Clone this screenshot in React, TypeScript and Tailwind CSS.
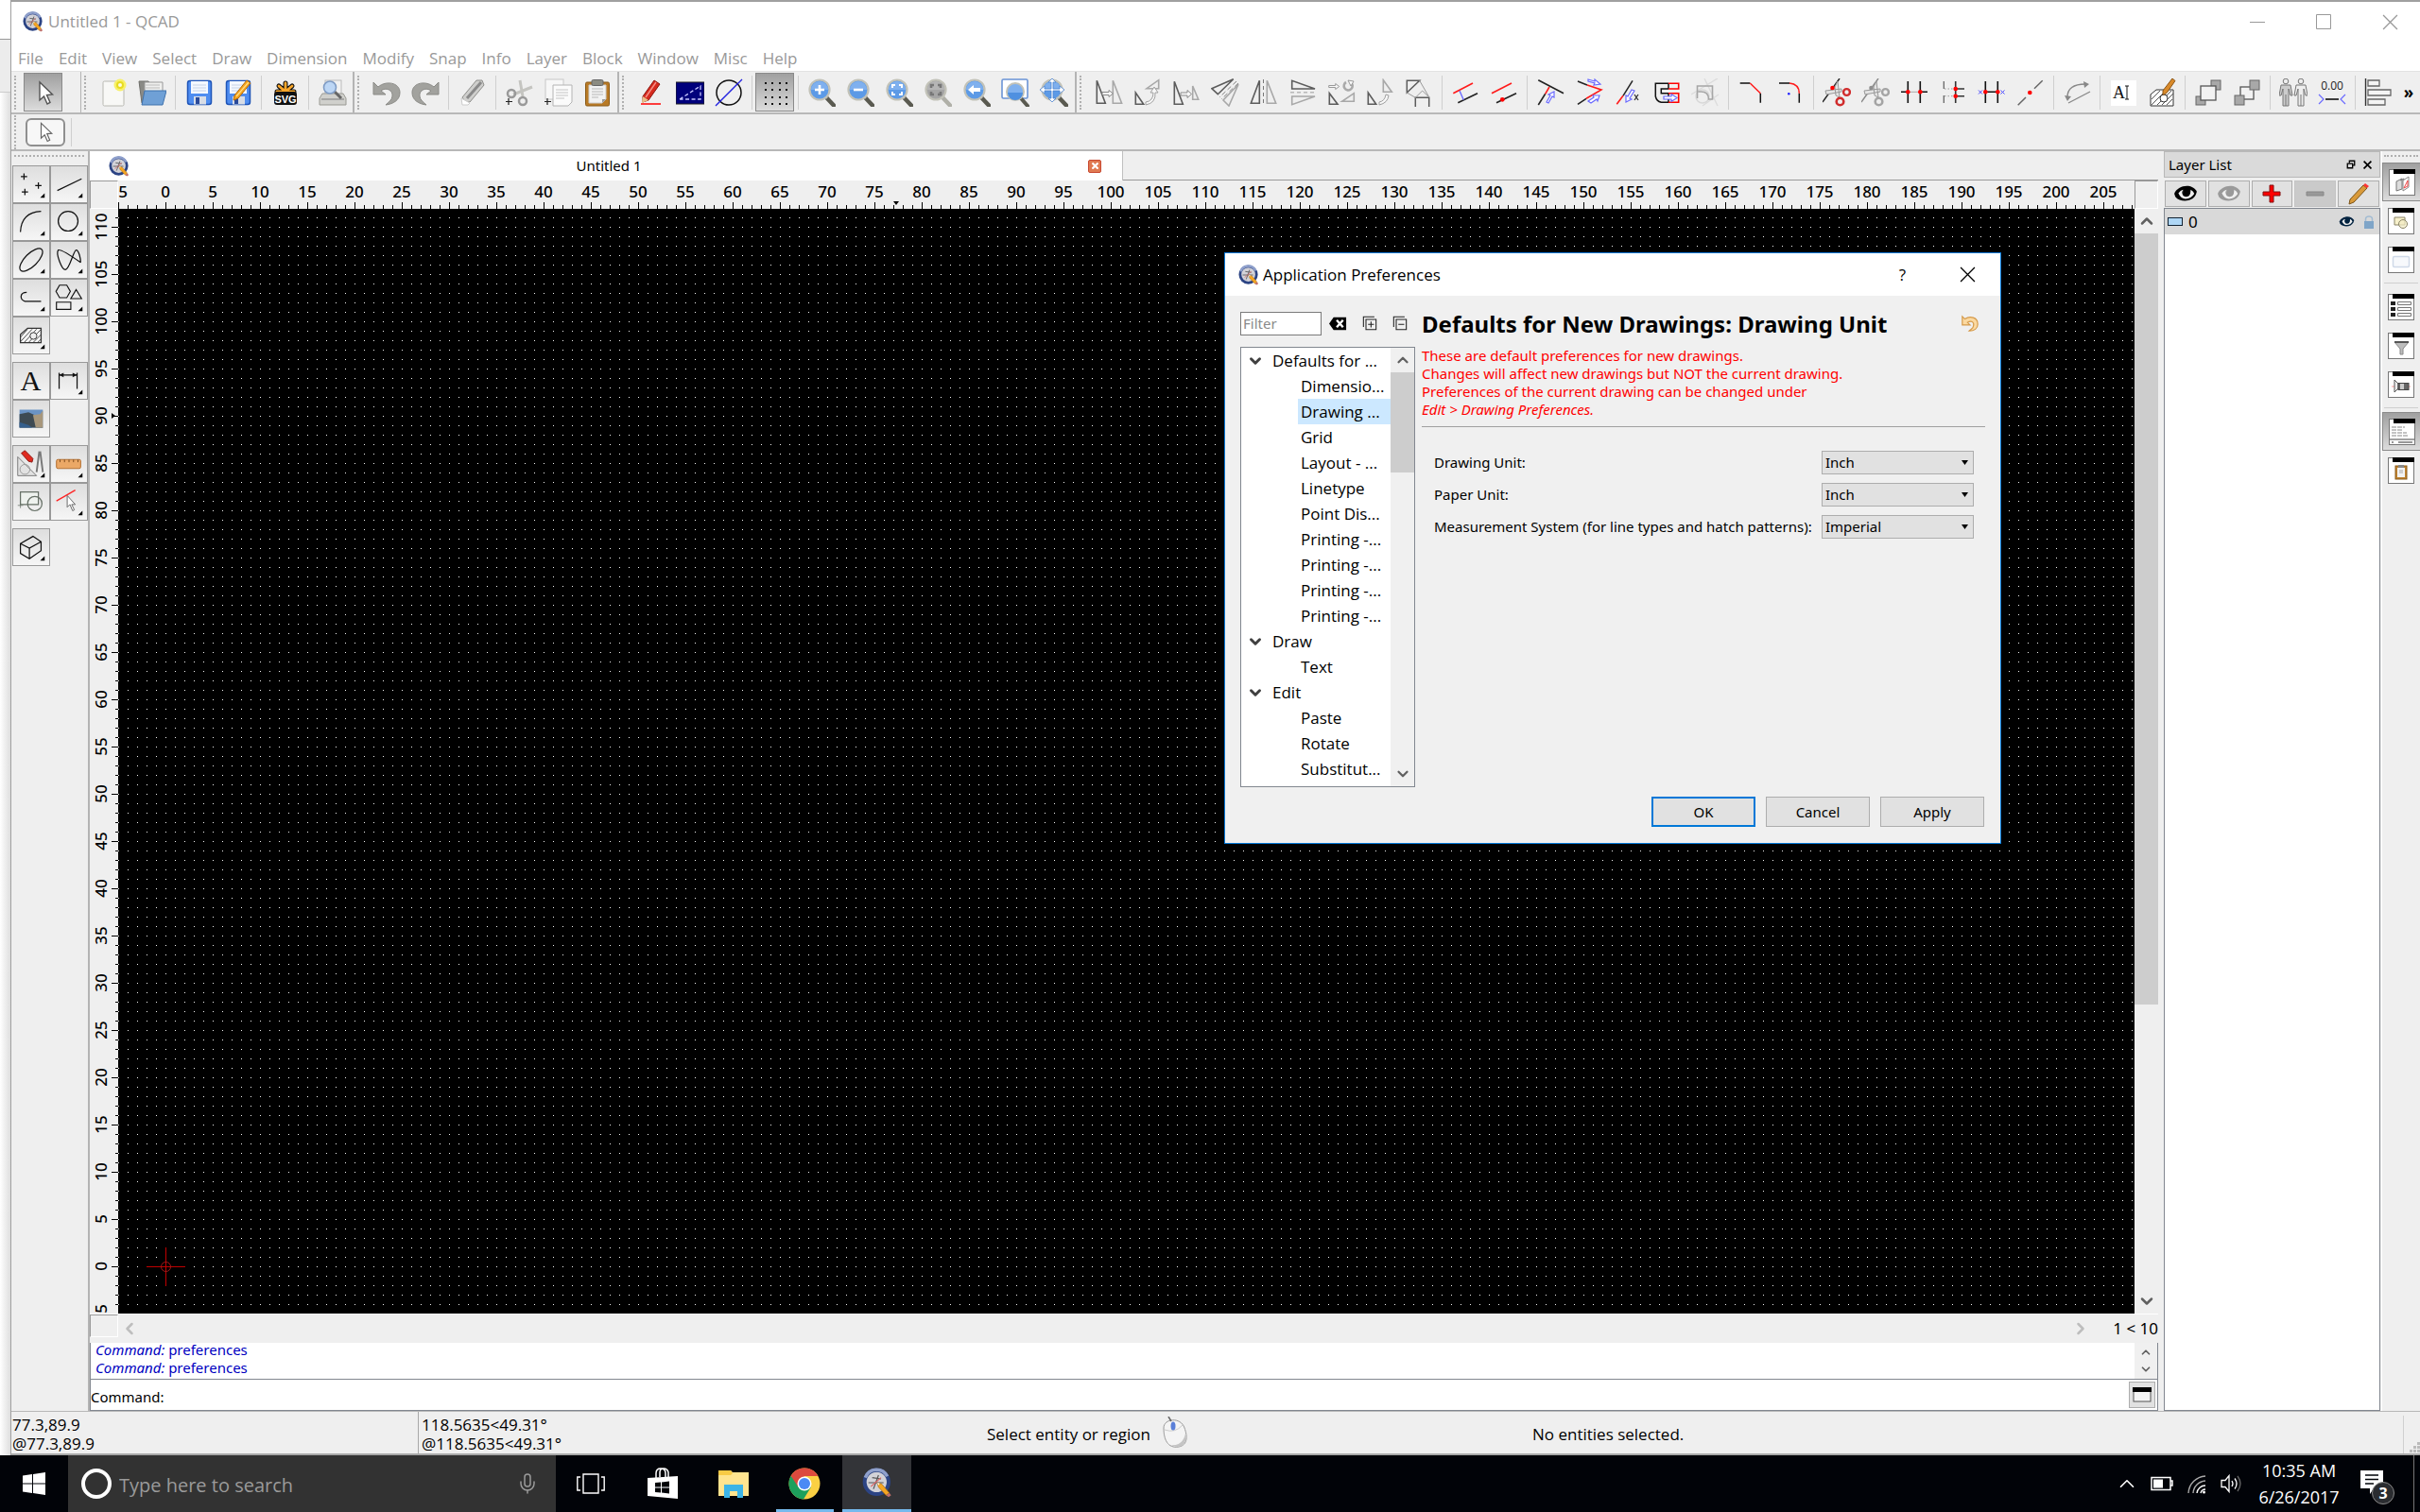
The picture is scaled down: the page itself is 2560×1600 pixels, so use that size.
import React from 'react';
import { ChevronDown, ChevronLeft, ChevronRight, ChevronUp, Mic } from 'lucide-react';

const MENUS = [
  'File', 'Edit', 'View', 'Select', 'Draw', 'Dimension', 'Modify', 'Snap',
  'Info', 'Layer', 'Block', 'Window', 'Misc', 'Help',
];

// Drawing units to pixels
const UNIT = 10;
const ORIGIN_X = 50;
const ORIGIN_Y = 1119;

const DARK = '#5c5c5c';
const SOFT = '#a8a8a8';
const BLUE = '#6a6aff';
const RED = '#ff1a1a';

/* ---------- icons ---------- */

interface SvgProps {
  size?: number;
  box?: number;
  children: React.ReactNode;
}

function Svg({ size = 30, box = 30, children }: SvgProps) {
  return (
    <svg width={size} height={size} viewBox={`0 0 ${box} ${box}`} fill="none" className="shrink-0" aria-hidden="true">
      {children}
    </svg>
  );
}

function Cross({ size = 16, weight = 1.2 }: { size?: number; weight?: number }) {
  return (
    <Svg size={size} box={16}>
      <path d="M1 1l14 14M15 1L1 15" stroke="currentColor" strokeWidth={weight} />
    </Svg>
  );
}

function Logo({ size = 22 }: { size?: number }) {
  return (
    <Svg size={size} box={24}>
      <circle cx="11.500" cy="11.500" r="9.500" fill="#d2d2d8" stroke="#2c4484" strokeWidth="3" />
      <path d="M2.500 8A9.500 9.500 0 0 1 20 7" stroke="#8fa0cc" strokeWidth="2.600" />
      <path d="M5 12h12M9 17l4-11M8 8l7 1" stroke="#555" strokeWidth="0.900" />
      <path d="M7 15l8-7" stroke="#d66" strokeWidth="0.800" />
      <path d="M12 12l3.500 1 6 7-2.500 2-6-6.500z" fill="#f5a623" stroke="#a86a10" strokeWidth="0.500" />
      <path d="M12 12l2 .5-1 1.500z" fill="#fff" />
      <path d="M21.500 20l1.500 2-2 1.500-2-1.500z" fill="#c0706a" />
    </Svg>
  );
}

function Tri({ d, soft = false }: { d: string; soft?: boolean }) {
  return <path d={d} stroke={soft ? SOFT : DARK} strokeWidth="1.600" />;
}

function Magnifier({ gray = false, children }: { gray?: boolean; children?: React.ReactNode }) {
  return (
    <Svg>
      <path d="M20 20l8 8.500" stroke={gray ? '#b0b0a8' : '#5a5a50'} strokeWidth="4.500" strokeLinecap="round" />
      <path d="M18 18l3 3" stroke="#aaa" strokeWidth="2" />
      <circle cx="13" cy="12" r="10.500" fill={gray ? '#a5a5a5' : '#5c9ae6'} stroke="#c2c2b8" strokeWidth="2.200" />
      <path d="M4 12a9 9 0 0 1 18 0z" fill={gray ? '#b5b5b5' : '#7fb0ee'} />
      {children}
    </Svg>
  );
}

function Scissors({ color, dot }: { color: string; dot: string }) {
  return (
    <Svg>
      <path d="M18 0L0 25" stroke={dot === '#ff0000' ? '#222' : '#888'} strokeWidth="1.400" />
      <path d="M16 3l2 17-4-2-1-9zM3 13l17-2v3l-16 3z" fill="#e4e4e4" stroke="#999" />
      <circle cx="25.500" cy="14.500" r="3.400" stroke={color} strokeWidth="2.400" />
      <circle cx="18.500" cy="24.500" r="3.800" stroke={color} strokeWidth="2.600" />
      <circle cx="10.500" cy="10" r="2.300" fill={dot} />
    </Svg>
  );
}

function Floppy({ children }: { children?: React.ReactNode }) {
  return (
    <Svg>
      <rect x="2.500" y="2.500" width="25" height="25" rx="2.500" fill="#4f8df0" stroke="#1f55b8" strokeWidth="1.500" />
      <rect x="6" y="3" width="18" height="13" fill="#f4f8ff" />
      <path d="M8 7h14M8 10h14M8 13h14" stroke="#c8d4e6" />
      <rect x="9" y="19" width="13" height="8.500" fill="#d8dde6" />
      <rect x="11" y="20" width="4" height="7" fill="#2a4a9a" />
      {children}
    </Svg>
  );
}

const PENCIL = (
  <g>
    <path d="M11 18L24 2l4 3-13 16-5 2z" fill="#f7a51e" stroke="#b56a0a" />
    <path d="M13 19L26 4" stroke="#ffe08a" strokeWidth="1.200" />
  </g>
);

const PLUS = <path d="M3 21v7M0 24.500h7" stroke="#222" strokeWidth="1.200" />;

const CURSOR = (
  <Svg>
    <path d="M11 4v19l4.500-4 3.500 8 3-1.500-3.500-8 6-.5z" fill="#fff" stroke="#555" strokeWidth="1.400" />
  </Svg>
);

const CLIPBOARD = (
  <Svg>
    <rect x="2.500" y="4" width="25" height="25" rx="1.500" fill="#b87a26" stroke="#8a5a18" />
    <path d="M6 7h18v15l-4 4H6z" fill="#f2f2f2" stroke="#ccc" />
    <path d="M9 11h12M9 14h12M9 17h12M9 20h7" stroke="#b8b8b8" />
    <rect x="9" y="1.500" width="12" height="6" rx="1.500" fill="#8c8c82" stroke="#666" />
    <path d="M24 22l-4 4v-4z" fill="#999" />
  </Svg>
);

const fileIcons = [
  <Svg key="new">
    <rect x="4" y="3" width="22" height="26" rx="1.500" fill="#f8f8f6" stroke="#b8b8b2" />
    <circle cx="22" cy="7" r="6.500" fill="#f7f06a" />
    <circle cx="22" cy="7" r="3" fill="#fffde0" stroke="#e8dc20" strokeWidth="2" />
  </Svg>,
  <Svg key="open">
    <path d="M1 3h10l2 3h12v20H4z" fill="#8a8a86" stroke="#6e6e6a" />
    <path d="M7 4h19v12H7z" fill="#f0f0ee" stroke="#999" />
    <path d="M8 7h15M8 10h15" stroke="#bbb" />
    <path d="M7 13h23l-4 15H4z" fill="#6fa0d6" stroke="#3f72ad" />
  </Svg>,
  'sep',
  <Floppy key="save" />,
  <Floppy key="save-as">{PENCIL}</Floppy>,
  'sep',
  <Svg key="svg">
    <g stroke="#111" strokeWidth="5" strokeLinecap="round">
      <path d="M15 14V5M15 14L8 8M15 14l7-6M15 14H6M15 14h9" />
    </g>
    <g stroke="#f9a72b" strokeWidth="2.800" strokeLinecap="round">
      <path d="M15 14V5M15 14L8 8M15 14l7-6M15 14H6M15 14h9" />
    </g>
    <rect x="3" y="14" width="24" height="14" rx="3" fill="#111" />
    <text x="15" y="26" textAnchor="middle" fontSize="11" fontWeight="700" fill="#fff" fontFamily="Liberation Sans">SVG</text>
  </Svg>,
  'sep',
  <Svg key="preview">
    <rect x="7" y="2" width="17" height="15" fill="#f1f1f1" stroke="#bbb" />
    <path d="M4 16h22l3 5v7H1v-7z" fill="#d0d0cc" stroke="#9a9a94" />
    <path d="M3 22h24" stroke="#999" strokeWidth="1.500" />
    <path d="M17 14l7 7" stroke="#666" strokeWidth="3" />
    <circle cx="12" cy="9.500" r="6.500" fill="#bcd6f5" stroke="#7f9cc5" strokeWidth="1.600" />
  </Svg>,
];

const editIcons = [
  <Svg key="undo">
    <path d="M1 4v13h13l-5-4c5-4 13-1 12 6-.5 4-4 6-7 9 8-1 15-5 15-13C29 4 14 2 6 9z" fill="#a2a29e" stroke="#8b8b87" />
  </Svg>,
  <Svg key="redo">
    <path d="M29 4v13H16l5-4C16 9 8 12 9 19c.5 4 4 6 7 9C8 27 1 23 1 15 1 4 16 2 24 9z" fill="#a2a29e" stroke="#8b8b87" />
  </Svg>,
  'sep',
  <Svg key="erase">
    <path d="M4 20L19 2h6l2 5-15 18H7z" fill="#cfcfcd" stroke="#8d8d8a" />
    <path d="M9 21L24 4" stroke="#8a8a8a" strokeWidth="3" />
    <path d="M3 21l9 5-2 2H4z" fill="#fff" stroke="#ccc" />
  </Svg>,
  'sep',
  <Svg key="cut">
    <path d="M15 2l3 17M28 9L8 17" stroke="#c4c4c0" strokeWidth="3" />
    <circle cx="6" cy="16" r="4" stroke="#999" strokeWidth="2.500" />
    <circle cx="18" cy="24" r="4" stroke="#999" strokeWidth="2.500" />
    {PLUS}
  </Svg>,
  <Svg key="copy">
    <rect x="1" y="1" width="19" height="21" fill="#f7f7f7" stroke="#c8c8c8" />
    <path d="M9 7h20v18l-4 4H9z" fill="#fbfbfb" stroke="#b4b4b4" />
    <path d="M12 12h13M12 15h13M12 18h13M12 21h9" stroke="#c4c4c4" />
    {PLUS}
  </Svg>,
  <React.Fragment key="paste">{CLIPBOARD}</React.Fragment>,
];

const viewIcons = [
  <Svg key="pen">
    <path d="M6 19L18 2l6 4-12 17-6 2z" fill="#d62a1e" stroke="#8a1510" />
    <path d="M9 20L20 4" stroke="#f59088" strokeWidth="1.500" />
    <path d="M6 19l6 4-7 3z" fill="#e8c088" />
    <path d="M4 27h21" stroke="#ff1010" strokeWidth="1.600" />
  </Svg>,
  <Svg key="draft">
    <rect x="0" y="4" width="30" height="23" fill="#00007c" stroke="#222" />
    <path d="M4 22L26 8v14H4" stroke="#c8c8ff" strokeWidth="1.300" strokeDasharray="4 2.500" />
  </Svg>,
  <Svg key="ortho">
    <circle cx="15" cy="15" r="13" stroke="#111" strokeWidth="1.500" />
    <path d="M1 29L29 1" stroke="#2020e0" strokeWidth="1.300" />
  </Svg>,
  'sep',
  'grid',
  'sep',
  <Magnifier key="in"><path d="M13 7v10M8 12h10" stroke="#fff" strokeWidth="2.600" /></Magnifier>,
  <Magnifier key="out"><path d="M8 12h10" stroke="#fff" strokeWidth="2.600" /></Magnifier>,
  <Magnifier key="auto"><path d="M8 10V7h3M15 7h3v3M18 14v3h-3M11 17H8v-3" stroke="#fff" strokeWidth="2" /></Magnifier>,
  <Magnifier key="sel" gray><path d="M8 10V7h3M15 7h3v3M18 14v3h-3M11 17H8v-3" stroke="#777" strokeWidth="2.600" /></Magnifier>,
  <Magnifier key="prev"><path d="M6 12l6-5v3h7v4h-7v3z" fill="#fff" /></Magnifier>,
  <Svg key="window">
    <rect x="1" y="1" width="27" height="20" rx="1.500" fill="#fff" stroke="#6b94d6" strokeWidth="1.600" />
    <path d="M21 21l7 8" stroke="#5a5a50" strokeWidth="4" strokeLinecap="round" />
    <circle cx="15" cy="14" r="9" fill="#7fb0ee" stroke="#c2c2b8" strokeWidth="2" />
    <path d="M7 15h16a8 8 0 0 1-16 0z" fill="#4f90e0" />
  </Svg>,
  <Magnifier key="pan">
    <path d="M13 0l4 4h-3v7h7V8l5 4-5 4v-3h-7v8h3l-4 4-4-4h3v-8H5v3l-5-4 5-4v3h7V4H9z" fill="#fff" stroke="#4a83d0" strokeWidth="0.800" />
  </Magnifier>,
];

const modifyIcons = [
  <Svg key="move">
    <Tri d="M2.300 2.300v24h9z" />
    <Tri soft d="M19.300 2.300v24h9.300z" />
    <path d="M8 14.500h7v-2l4.500 3.500-4.500 3.500v-2H8z" fill="#f8f8f8" stroke="#8a8a8a" />
  </Svg>,
  <Svg key="rotate">
    <Tri d="M2.300 15v12.300h8.400z" />
    <Tri soft d="M26.700 1.700v9H14z" />
    <path d="M13 25q8-1 8-10h-3l4-6 4 6h-3q1 11-10 13z" fill="#f8f8f8" stroke="#a0a0a0" />
  </Svg>,
  <Svg key="scale">
    <Tri d="M2.300 3.300v24h9z" />
    <Tri soft d="M21.700 8v14.300h6z" />
    <path d="M9 15h7v-2.500l4.500 4-4.500 4V18H9z" fill="#f8f8f8" stroke="#8a8a8a" />
  </Svg>,
  <Svg key="mirror">
    <Tri d="M.8 10.700L23.700.8 7.300 16.700z" />
    <Tri soft d="M29 6.300L13 23l6 6z" />
    <path d="M27 3L9 20M29 5L11 22" stroke="#888" strokeDasharray="5 3" />
  </Svg>,
  <Svg key="flip-h">
    <Tri d="M10.300 2.300v24h-9z" />
    <path d="M14.500 1v28" stroke="#777" strokeDasharray="4 3" />
    <Tri soft d="M18.300 2.300v24h9.400z" />
  </Svg>,
  <Svg key="flip-v">
    <Tri d="M3.700 2.300V11H28z" />
    <path d="M2 14.700h27" stroke="#b8b8b8" strokeWidth="1.600" strokeDasharray="4 3" />
    <Tri soft d="M3.700 19v8.700L28 19z" />
  </Svg>,
  <Svg key="move-rotate">
    <path d="M1.700 7.500h7v-2l4 3-4 3v-2h-7z" fill="#f8f8f8" stroke="#999" />
    <path d="M26 5.500a4.500 4.500 0 1 1-6-1.500" stroke="#aaa" strokeWidth="2.600" />
    <path d="M22 2l6 1-3 5z" fill="#f8f8f8" stroke="#999" />
    <Tri d="M2.300 15.700v11.600H11z" />
    <Tri soft d="M28.300 15.700v8.600H15.700z" />
  </Svg>,
  <Svg key="rotate2">
    <Tri d="M2.300 15v12.300h8.400z" />
    <Tri soft d="M18.300 1.700v12.600h9z" />
    <path d="M14 25q6-1 7-8l3 1q-1 8-10 10z" fill="#f8f8f8" stroke="#a0a0a0" />
  </Svg>,
  <Svg key="project">
    <path d="M2.300 15V2.300h13.400zM11.300 30V20.300h14.400V30" stroke={DARK} strokeWidth="1.500" />
    <path d="M15.700 2.300l10 17.400M2.300 15l9 5.300 7.400-7.300 7 7" stroke="#999" />
  </Svg>,
  'sep',
  <Svg key="parallel">
    <path d="M2.300 15.700L23 5" stroke={RED} strokeWidth="1.600" />
    <path d="M7.300 25.700l20.700-10" stroke="#222" strokeWidth="1.600" />
    <path d="M9 13l4.300 9.700" stroke={BLUE} strokeWidth="1.400" />
  </Svg>,
  <Svg key="parallel-point">
    <path d="M2 15.700L23 5" stroke={RED} strokeWidth="1.600" />
    <path d="M7 25.700l21-10" stroke="#222" strokeWidth="1.600" />
    <circle cx="13.300" cy="22.300" r="2.400" fill="#f00" />
  </Svg>,
  'sep',
  <Svg key="trim">
    <path d="M2.300 1.700L29 15.700M2.300 28l7.400-11.700" stroke="#222" strokeWidth="1.600" />
    <path d="M9.700 16.300L14 9" stroke={RED} strokeWidth="1.600" />
    <path d="M11 25l4-7-2-1 6-3 0 6-2-1-4 7z" fill="#fff" stroke={BLUE} strokeWidth="1.200" />
  </Svg>,
  <Svg key="trim-both">
    <path d="M3 3l10 4M3 27.300l9-6" stroke="#222" strokeWidth="1.600" />
    <path d="M13 7l15 5-16 9.300" stroke={RED} strokeWidth="1.600" />
    <path d="M14 1l7 2 0-2 6 5-7 1 1-2-7-2zM14 24l6-4-1-2h7l-2 6-1-2-6 4z" fill="#fff" stroke={BLUE} strokeWidth="1.200" />
  </Svg>,
  <Svg key="lengthen">
    <path d="M20 2.300l-10 16" stroke="#222" strokeWidth="1.500" />
    <path d="M10 18.300l-6.700 9" stroke={RED} strokeWidth="1.600" />
    <path d="M19 12l-4 7-2-1v7l6-3-2-1 5-8z" fill="#fff" stroke={BLUE} strokeWidth="1.200" />
    <path d="M22 17l4 6M26 17l-4 6" stroke="#333" strokeWidth="1.300" />
  </Svg>,
  <Svg key="stretch">
    <path d="M17 5.300H3.300V19q1 5 6 6.300H17V15.700M17 11H9.300v4.700H17M17 5v6" stroke="#111" strokeWidth="1.500" />
    <path d="M17 5.300h10.700V11H17M17 15.700h10.700v9.600H17" stroke="#f00" strokeWidth="1.600" />
    <path d="M12 19h8v-2.500l6 4-6 4V22h-8z" fill="#fff" stroke={BLUE} strokeWidth="1.200" />
  </Svg>,
  <Svg key="trim-shape">
    <path d="M0 17L28 0M14 0l14 29M12 29l17-12" stroke="#dcdcdc" strokeWidth="1.400" />
    <circle cx="12" cy="19" r="7" stroke="#d8d8d8" strokeWidth="1.500" />
    <path d="M6.500 21V8h16v14h-4q0-8-8-8h-3" stroke="#a6a6a6" strokeWidth="1.600" />
  </Svg>,
  'sep',
  <Svg key="bevel">
    <path d="M2.700 5h10.600M24.300 15.700v10" stroke="#111" strokeWidth="1.500" />
    <path d="M13.300 5l11 10.700" stroke={RED} strokeWidth="1.500" />
  </Svg>,
  <Svg key="round">
    <path d="M3 5h11M24.300 15.700v10" stroke="#111" strokeWidth="1.500" />
    <path d="M14 5q10.300 1 10.300 10.700" stroke={RED} strokeWidth="1.500" />
    <circle cx="13.300" cy="16.300" r="1.300" fill="#22f" />
  </Svg>,
  'sep',
  <Scissors key="divide" color="#d02c2c" dot="#ff0000" />,
  <Scissors key="divide2" color="#a4a4a4" dot="#8f8f8f" />,
  <Svg key="break">
    <path d="M8.300 3v23M21.300 3v23M1 14.300h7M21 14.300h8" stroke="#111" strokeWidth="1.600" />
    <path d="M8 14.300h13" stroke="#aaa" />
    <circle cx="8.300" cy="14.300" r="2.300" fill="#f00" />
    <circle cx="21.300" cy="14.300" r="2.300" fill="#f00" />
  </Svg>,
  <Svg key="break-auto">
    <path d="M5.300 3v8M5.300 18v8" stroke="#666" strokeWidth="1.300" />
    <path d="M6 11h11M6 18.700h11" stroke="#999" strokeDasharray="1.500 2" />
    <path d="M17.700 3v23M18 11h9M18 18.700h9" stroke="#333" strokeWidth="1.600" />
    <circle cx="17.700" cy="11" r="2.300" fill="#f00" />
    <circle cx="17.700" cy="18.700" r="2.300" fill="#f00" />
  </Svg>,
  <Svg key="segment">
    <path d="M8.300 3v23M21.300 3v23M8 14.300h13" stroke="#111" strokeWidth="1.600" />
    <path d="M1 12.500l4 4M5 12.500l-4 4M24.500 12.500l4 4M28.500 12.500l-4 4" stroke="#44f" />
    <circle cx="8.300" cy="14.300" r="2.300" fill="#f00" />
    <circle cx="21.300" cy="14.300" r="2.300" fill="#f00" />
  </Svg>,
  <Svg key="gap">
    <path d="M1.700 28.300L10 20M27.700 2.300L19 10.700" stroke="#666" strokeWidth="1.500" />
    <circle cx="14.300" cy="15" r="2.300" fill="#f00" />
  </Svg>,
  'sep',
  <Svg key="reverse">
    <path d="M5 20Q5 6 24 6M6 26l23-12" stroke="#888" strokeWidth="1.400" />
    <path d="M22 3l6 3-5 4zM2 18l3 6 4-5z" fill="#888" />
  </Svg>,
  'sep',
  <Svg key="edit-text">
    <rect x="2" y="2" width="27" height="27" fill="#fff" />
    <text x="4" y="21" fontSize="18" fontFamily="Liberation Serif" fill="#111">A</text>
    <path d="M17 8h4M19 8v14M17 22h4" stroke="#111" />
  </Svg>,
  <Svg key="edit-hatch">
    <path d="M3 17l6-5h18v17H3z" fill="#fff" stroke="#333" />
    <path d="M4 22l9-9M4 28l15-15M10 28l15-15M15 28l12-12M20 28l6-6" stroke="#555" />
    <circle cx="17" cy="21" r="4" fill="#fff" stroke="#333" />
    <path d="M16 13L26 0l3 2.500-9 13-4 2z" fill="#d98a2a" stroke="#8a5518" />
  </Svg>,
  'sep',
  <Svg key="front">
    <rect x="2" y="19" width="10" height="9" fill="#a8a8a8" stroke="#666" />
    <rect x="18" y="2" width="10" height="10" fill="#a8a8a8" stroke="#666" />
    <rect x="7" y="8" width="16" height="15" fill="#f2f2f2" stroke="#555" strokeWidth="1.300" />
  </Svg>,
  <Svg key="back">
    <rect x="8" y="9" width="14" height="13" fill="#f2f2f2" stroke="#555" strokeWidth="1.300" />
    <rect x="2" y="18" width="10" height="10" fill="#a8a8a8" stroke="#666" />
    <rect x="18" y="2" width="10" height="10" fill="#a8a8a8" stroke="#666" />
  </Svg>,
  'sep',
  <Svg key="copy-props">
    {[7, 23].map((x) => (
      <g key={x} stroke="#777">
        <circle cx={x} cy="3" r="2.800" fill="#eee" />
        <path d={`M${x - 5} 7h10l2 11h-2l-2-7v18h-6V11l-2 7h-2z`} fill={x === 7 ? '#ccc' : '#eee'} />
        <path d={`M${x} 17v12`} />
      </g>
    ))}
  </Svg>,
  <Svg key="dim">
    <text x="15" y="12" textAnchor="middle" fontSize="12" fontFamily="Open Sans" fill="#222">0.00</text>
    <path d="M8 22h14" stroke="#111" strokeWidth="1.600" />
    <path d="M1 17l5 5-5 5M29 17l-5 5 5 5" stroke={BLUE} strokeWidth="1.200" />
  </Svg>,
  'sep',
  <Svg key="align">
    <path d="M1.500 0v29" stroke="#333" strokeWidth="1.400" />
    <path d="M4 2h12v6H4zM4 12h24v6H4zM4 22h18v6H4z" fill="#f4f4f4" stroke="#666" strokeWidth="1.300" />
  </Svg>,
];

const paletteIcons: Record<string, React.ReactNode> = {
  point: <path d="M12 8v7M8.500 11.500h7M28 18v7M24.500 21.500h7M13 25v7M9.500 28.500h7" stroke="#111" strokeWidth="1.300" />,
  line: <path d="M7 27l27-13" stroke="#111" strokeWidth="1.300" />,
  arc: <path d="M8 31Q9 9 31 8" stroke="#111" strokeWidth="1.300" />,
  circle: <circle cx="19" cy="19" r="11" stroke="#111" strokeWidth="1.300" />,
  ellipse: <ellipse cx="20" cy="20" rx="16.500" ry="7" transform="rotate(-45 20 20)" stroke="#111" strokeWidth="1.300" />,
  spline: <path d="M33 23Q12 8 8 9c-3 4 4 22 8 22C21 30 25 9 28 9c3 0 5 10 5 14" stroke="#111" strokeWidth="1.300" />,
  polyline: <path d="M31 24H13c-6-2-6-10 2-10" stroke="#111" strokeWidth="1.300" />,
  shape: <path d="M9.500 6h8l4 7-4 7h-8l-4-7zM28 11l6 10H22zM6 25h16v8H6z" stroke="#111" strokeWidth="1.200" />,
  hatch: (
    <g stroke="#333">
      <path d="M8 19l8-7h15v16H8z" fill="#f6f6f6" strokeWidth="1.300" />
      <path d="M8 22l8-9M8 27l13-14M12 28l14-15M17 28l14-15M22 28l9-9M27 28l4-4" strokeWidth="0.900" />
      <circle cx="22.500" cy="20.500" r="3.800" fill="#eee" />
    </g>
  ),
  text: <text x="19.500" y="31" textAnchor="middle" fontSize="32" fontFamily="Liberation Serif" fill="#111">A</text>,
  dimension: (
    <g stroke="#111" strokeWidth="1.300">
      <path d="M9 11v18M29 11v18M9 13.500h20" />
      <path d="M9 13.500l5-2.500v5zM29 13.500l-5-2.500v5z" fill="#111" stroke="none" />
    </g>
  ),
  image: (
    <g>
      <rect x="7" y="10" width="26" height="20" fill="#6b93c4" />
      <path d="M7 15l10-2 11 5 5 12H7z" fill="#3e4a52" />
      <path d="M22 16l8-1 3-4v19h-8z" fill="#a8977c" />
      <path d="M7 24l10 3 4 3H7z" fill="#355f8c" />
    </g>
  ),
  snap: (
    <g>
      <path d="M5 12v21h21z" fill="#e2e2e2" stroke="#777" />
      <circle cx="13" cy="26" r="5.500" stroke="#999" />
      <path d="M9 8l4-3 9 9-1 4-4-1z" fill="#e02a20" stroke="#8a1a14" />
      <path d="M29 6l-3 23M30 6l3 23" stroke="#777" strokeWidth="2" />
    </g>
  ),
  ruler: (
    <g>
      <rect x="6" y="15" width="27" height="10" rx="1.500" fill="#eba866" stroke="#b06c2c" />
      <path d="M10 15v3M15 15v3M20 15v3M25 15v3M30 15v3" stroke="#7a4a1c" />
    </g>
  ),
  block: (
    <g stroke="#667066" strokeWidth="1.300">
      <path d="M8 9h20v14H8z" fill="#eef2ee" />
      <circle cx="24" cy="22" r="8" />
      <path d="M8 21v6M5 24h6" strokeWidth="0.800" />
    </g>
  ),
  select: (
    <g>
      <path d="M6 19L27 7" stroke="#f22" strokeWidth="1.400" />
      <path d="M18 13v13l3-3 3 7 2-1-3-6h4z" fill="#fff" stroke="#666" />
    </g>
  ),
  box: <path d="M8 16l14-8 9 6v10l-13 9-10-6zM8 16l10 5 13-7M18 21v12" stroke="#111" strokeWidth="1.300" />,
};

const PALETTE = [
  [
    ['point', 1], ['line', 1], ['arc', 1], ['circle', 1], ['ellipse', 1],
    ['spline', 1], ['polyline', 1], ['shape', 1], ['hatch', 1],
  ],
  [['text', 0], ['dimension', 1], ['image', 0]],
  [['snap', 1], ['ruler', 1], ['block', 0], ['select', 1]],
  [['box', 1]],
] as [string, number][][];

const WIDGETS: (string | null)[] = ['layers', 'blocks', 'views', null, 'properties', 'filter', 'library', null, 'command', 'clipboard'];

const widgetIcons: Record<string, React.ReactNode> = {
  layers: (
    <g>
      <path d="M8 13l6-3v11l-6 2zM12 12l4-2v11" fill="#ddd" stroke="#777" />
      <path d="M15 12l6-4v11l-6 4z" fill="#fff" stroke="#888" />
      <path d="M16 20l4-8v6z" stroke="#e44" />
    </g>
  ),
  blocks: (
    <g stroke="#8a8466">
      <path d="M7 10h11v8H7z" fill="#f8f2cc" />
      <circle cx="16" cy="17" r="4.500" fill="#f4edc4" fillOpacity="0.700" />
    </g>
  ),
  views: <rect x="5.500" y="10.500" width="17" height="11" rx="1.500" fill="#f7f9fc" stroke="#cfd9e8" strokeWidth="1.500" />,
  properties: (
    <g>
      <path d="M3 8h5v4H3zM3 14h5v4H3zM3 20h5v4H3z" fill="#222" />
      <path d="M10.500 8.500h14v3h-14zM10.500 14.500h14v3h-14zM10.500 20.500h14v3h-14z" stroke="#777" />
    </g>
  ),
  filter: (
    <g>
      <path d="M7 10h15l-6 7v6h-3v-6z" fill="#bdbdbd" stroke="#888" />
      <path d="M7 10h15" stroke="#555" strokeWidth="2" />
    </g>
  ),
  library: (
    <g>
      <path d="M4 16h20" stroke="#f99" />
      <path d="M7 9v13l4-4v-5z" fill="#eee" stroke="#555" />
      <rect x="11" y="12.500" width="11" height="7" fill="#666" stroke="#444" />
      <path d="M13 13h4v6h-4z" fill="#ccc" />
    </g>
  ),
  command: (
    <g>
      <path d="M3 9h14M3 12h12M3 15h16M3 18h17" stroke="#888" strokeDasharray="5 1" />
      <path d="M1 22h26" stroke="#444" />
      <path d="M3 25h2M10 25h15" stroke="#777" strokeWidth="1.600" />
    </g>
  ),
  clipboard: (
    <g>
      <rect x="8" y="9" width="12" height="14" fill="#c08330" stroke="#8a5a18" />
      <rect x="10" y="11" width="8" height="10" fill="#f2f2f2" />
      <path d="M12 14h4M12 16h4" stroke="#aaa" />
      <rect x="11" y="8" width="6" height="3" fill="#888" />
    </g>
  ),
};

function Eye({ color, size = 26 }: { color: string; size?: number }) {
  return (
    <Svg size={size} box={24}>
      <path d="M1 12C4 4 18 1 23 10l-1 3c-3 7-15 8-20 2" fill={color} />
      <path d="M5 11.500q2-3 4.500-3.500-1 5 2.500 6 5 .5 5-6 3 1.500 3.500 4-3 5-8.500 5-4.500 0-7-5.500z" fill="#f0f0f0" />
      <path d="M8.500 9q0 6 4 6 4.500 0 4-6-1 3-4 3-2.500 0-4-3z" fill={color} />
    </Svg>
  );
}

/* ---------- toolbars ---------- */

function Grip() {
  return (
    <div className="flex w-[13px] shrink-0 items-center pl-[3px]">
      <div className="h-9 w-0 border-l-2 border-dotted border-[#b0b0b0]" />
    </div>
  );
}

interface ToolGroupProps {
  icons: React.ReactNode[];
  sep?: string;
  className?: string;
}

function ToolGroup({ icons, sep = 'w-[9px]', className = '' }: ToolGroupProps) {
  return (
    <div className={`flex shrink-0 items-center border-[#b4b4b4] ${className}`}>
      <Grip />
      {icons.map((icon, i) => {
        if (icon === 'sep') {
          return (
            <div key={i} className={`flex shrink-0 justify-center ${sep}`}>
              <div className="h-9 w-px bg-[#cfcfcf]" />
            </div>
          );
        }
        if (icon === 'grid') {
          return (
            <button key={i} aria-label="Grid" className="flex h-[41px] w-[41px] items-center justify-center border border-[#8a8a8a] bg-linear-to-b from-[#a0a0a0] to-[#dcdcdc]">
              <Svg>
                {[5, 12, 20, 27].map((y) =>
                  [4, 11, 19, 26].map((x) => <rect key={`${x}-${y}`} x={x} y={y - 1} width="2" height="2" fill="#111" />)
                )}
              </Svg>
            </button>
          );
        }
        return (
          <button key={i} className="flex h-[41px] w-[41px] shrink-0 items-center justify-center">
            {icon}
          </button>
        );
      })}
    </div>
  );
}

function Toolbars() {
  return (
    <div className="shrink-0 border-t border-[#e2e2e2] bg-[#efefef]">
      <div className="flex h-[45px] overflow-hidden border-b-2 border-[#b8b8b8]">
        <div className="flex shrink-0 items-center border-r border-[#b4b4b4] pr-[19px]">
          <Grip />
          <button aria-label="Reset" className="flex h-[41px] w-[41px] items-center justify-center border border-[#8a8a8a] bg-linear-to-b from-[#a0a0a0] to-[#dcdcdc]">
            {CURSOR}
          </button>
        </div>
        <ToolGroup icons={fileIcons} className="border-r-2 pr-px" />
        <ToolGroup icons={editIcons} className="border-r-2 pr-px" />
        <ToolGroup icons={viewIcons} sep="w-2" className="border-r-2 pr-[2px]" />
        <ToolGroup icons={modifyIcons} sep="w-2" />
        <button aria-label="More tools" className="flex flex-1 items-center justify-center text-[17px] leading-6 font-bold">»</button>
      </div>
      <div className="flex h-[39px] border-b-2 border-[#b8b8b8]">
        <Grip />
        <div className="flex items-center gap-1.5 pl-0.5">
          <button aria-label="Select" className="flex h-[30px] w-[42px] items-center justify-center rounded-md border-2 border-[#8f8f8f] bg-[#f7f7f7]">
            <Svg size={25}>
              <path d="M9 4v19l4.500-4 3.500 8 3-1.500-3.500-8 6-.5z" fill="#fff" stroke="#666" strokeWidth="1.400" />
            </Svg>
          </button>
          <div className="h-[30px] w-px bg-[#cfcfcf]" />
        </div>
      </div>
    </div>
  );
}

function Palette() {
  return (
    <aside className="flex w-[83px] shrink-0 flex-col border-r-2 border-[#b4b4b4] bg-[#efefef] pt-1 pl-px">
      <div className="mr-1 ml-0.5 border-t-2 border-dotted border-[#b0b0b0]" />
      <div className="mt-[9px] flex flex-col gap-2">
        {PALETTE.map((group, g) => (
          <div key={g} className="grid grid-cols-[40px_40px]">
            {group.map(([name, more]) => (
              <button key={name} aria-label={name} className="h-10 w-10 border border-[#999] bg-linear-to-b from-[#dedede] to-[#f6f6f6]">
                <svg viewBox="0 0 40 40" fill="none" className="h-full w-full">
                  {paletteIcons[name]}
                  {more === 1 && <path d="M35 30v5h-5z" fill="#000" />}
                </svg>
              </button>
            ))}
          </div>
        ))}
      </div>
    </aside>
  );
}

/* ---------- drawing area ---------- */

function range(from: number, to: number) {
  return Array.from({ length: to - from + 1 }, (_, i) => from + i);
}

function HorizontalRuler() {
  return (
    <svg className="h-[30px] w-full min-w-0 flex-1" aria-hidden="true">
      {range(-5, 208).map((u) => {
        const x = ORIGIN_X + u * UNIT;
        return (
          <g key={u}>
            <path d={`M${x + 0.5} 30V${u % 5 === 0 ? 23 : 26}`} stroke="#000" />
            {u % 5 === 0 && (
              <text x={u < 0 ? x + 5 : x} y="18" textAnchor="middle" fontSize="17" fontWeight="500">{Math.abs(u)}</text>
            )}
          </g>
        );
      })}
      <path d="M820 22h6l-3 4z" />
    </svg>
  );
}

function VerticalRuler() {
  return (
    <svg className="w-[30px] shrink-0 bg-[#efefef]" aria-hidden="true">
      {range(-5, 111).map((u) => {
        const y = ORIGIN_Y - u * UNIT;
        return (
          <g key={u}>
            <path d={`M30 ${y + 0.5}H${u % 5 === 0 ? 23 : 27}`} stroke="#000" />
            {u % 5 === 0 && (
              <text transform={`translate(18 ${u < 0 ? y - 5 : y}) rotate(-90)`} textAnchor="middle" fontSize="17" fontWeight="500">{Math.abs(u)}</text>
            )}
          </g>
        );
      })}
      <path d="M23 216v6l4-3z" />
    </svg>
  );
}

function Canvas() {
  return (
    <svg className="min-w-0 flex-1 bg-black" aria-label="Drawing">
      <defs>
        <pattern id="grid" width={UNIT} height={UNIT} patternUnits="userSpaceOnUse">
          <rect x="0" y="9" width="1" height="1" fill="#f0f0f0" />
        </pattern>
      </defs>
      <rect width="100%" height="100%" fill="url(#grid)" />
      <path d={`M${ORIGIN_X - 20} ${ORIGIN_Y + 0.5}h41M${ORIGIN_X + 0.5} ${ORIGIN_Y - 20}v41`} stroke="#c00000" />
      <circle cx={ORIGIN_X + 0.5} cy={ORIGIN_Y + 0.5} r="5" fill="none" stroke="#a01818" />
    </svg>
  );
}

function DrawingArea() {
  return (
    <section className="flex min-w-0 flex-1 flex-col">
      <div className="flex h-[31px] shrink-0 items-stretch">
        <div className="flex w-[1093px] items-center border-r border-[#c0c0c0] bg-white pr-[22px] pl-5">
          <Logo />
          <span className="flex-1 text-center text-[15px]">Untitled 1</span>
          <button aria-label="Close tab" className="flex h-3.5 w-3.5 items-center justify-center rounded-xs border border-[#c84a32] bg-[#e07a52] text-white">
            <Cross size={7} weight={5} />
          </button>
        </div>
        <div className="flex-1 border-b border-[#999]" />
      </div>
      <div className="flex h-[30px] shrink-0">
        <div className="w-[30px] shrink-0 border border-t-[#999] border-r-white border-b-white border-l-[#999]" />
        <HorizontalRuler />
        <div className="w-[25px] shrink-0 border border-t-[#999] border-r-white border-b-white border-l-[#999]" />
      </div>
      <div className="flex min-h-0 flex-1">
        <VerticalRuler />
        <Canvas />
        <div className="flex w-[25px] shrink-0 flex-col items-center text-[#606060]">
          <div className="flex h-[26px] items-center"><ChevronUp size={20} strokeWidth={3} /></div>
          <div className="w-full flex-[816] bg-[#cdcdcd]" />
          <div className="flex-[300]" />
          <div className="flex h-[27px] items-center"><ChevronDown size={20} strokeWidth={3} /></div>
        </div>
      </div>
      <div className="flex h-[31px] shrink-0 items-center border-t border-white">
        <div className="h-6 w-[30px] self-start border border-t-[#999] border-r-white border-b-white border-l-[#999]" />
        <ChevronLeft size={20} strokeWidth={3} className="ml-0.5 text-[#bdbdbd]" />
        <div className="flex-1" />
        <ChevronRight size={20} strokeWidth={3} className="mr-6 text-[#bdbdbd]" />
        <span className="text-[17px]">1 &lt; 10</span>
      </div>
      <div className="flex h-[39px] shrink-0 border-r border-b border-l border-[#828790] bg-white">
        <div className="flex-1 overflow-hidden pl-[5px] text-[15px] leading-[19px] text-[#0000c0]">
          <p className="-mt-0.5"><i>Command:</i> preferences</p>
          <p><i>Command:</i> preferences</p>
        </div>
        <div className="flex w-6 flex-col items-center justify-evenly bg-[#f0f0f0] text-[#606060]">
          <ChevronUp size={14} strokeWidth={3} />
          <ChevronDown size={14} strokeWidth={3} />
        </div>
      </div>
      <div className="flex h-[33px] shrink-0 items-center border-r border-b border-l border-[#828790] bg-white pr-0.5">
        <label htmlFor="command" className="pt-1 text-[15px]">Command:</label>
        <input id="command" className="min-w-0 flex-1 px-1 outline-none" />
        <button aria-label="Toggle history" className="flex h-7 w-7 items-center justify-center border border-[#adadad] bg-[#e1e1e1]">
          <Svg size={20} box={20}>
            <rect x="1" y="3" width="18" height="14" fill="#f4f4f4" stroke="#555" />
            <path d="M0 2h20v5H0z" fill="#000" />
          </Svg>
        </button>
      </div>
    </section>
  );
}

/* ---------- docks ---------- */

function LayerList() {
  return (
    <section className="ml-1.5 flex w-[229px] shrink-0 flex-col">
      <header className="flex h-7 shrink-0 items-center border border-[#b8b8b8] bg-[#dadada] pr-1 pl-1 text-[15px]">
        <h2 className="flex-1">Layer List</h2>
        <button aria-label="Float" className="mr-2">
          <Svg size={10} box={12}>
            <path d="M4 4V1.500h6.500V7H8M1.500 5h6.500v5.500H1.500z" stroke="#000" strokeWidth="1.600" />
          </Svg>
        </button>
        <button aria-label="Close" className="pr-1"><Cross size={9} weight={3} /></button>
      </header>
      <div className="mt-[3px] mb-px grid h-7 shrink-0 grid-cols-5 gap-0.5 px-px">
        <button aria-label="Show all" className="flex items-center justify-center border border-[#adadad] bg-[#e1e1e1]"><Eye color="#000" /></button>
        <button aria-label="Hide all" className="flex items-center justify-center border border-[#adadad] bg-[#e1e1e1]"><Eye color="#9a9a9a" /></button>
        <button aria-label="Add layer" className="flex items-center justify-center border border-[#adadad] bg-[#e1e1e1]">
          <Svg size={20} box={20}><path d="M8 1h4v7h7v4h-7v7H8v-7H1V8h7z" fill="#f00" stroke="#801010" /></Svg>
        </button>
        <button aria-label="Remove layer" className="flex items-center justify-center border border-[#c4c4c4] bg-[#cacaca]">
          <Svg size={20} box={20}><path d="M1 8h18v4H1z" fill="#999" stroke="#888" /></Svg>
        </button>
        <button aria-label="Edit layer" className="flex items-center justify-center border border-[#adadad] bg-[#e1e1e1]">
          <Svg size={24} box={24}>
            <path d="M3 18L17 3l4 3L7 21l-5 2z" fill="#d99a3a" stroke="#7a5418" />
            <path d="M17 3l2-2 4 3-2 2z" fill="#f33" />
          </Svg>
        </button>
      </div>
      <ul className="flex-1 border border-[#828790] bg-white">
        <li className="flex h-[27px] items-center bg-[#d9d9d9] pr-1 pl-[3px] text-[17px]">
          <span className="h-[9px] w-4 border border-[#123] bg-[#aed6f5]" />
          <span className="flex-1 pl-1.5">0</span>
          <Eye color="#022340" size={17} />
          <span className="ml-2 flex">
            <Svg size={14} box={14}>
              <path d="M3.500 7V4a3.500 3 0 0 1 7 0v3" stroke="#a3bcd2" strokeWidth="1.500" />
              <rect x="2" y="6" width="10" height="8" fill="#7fa5c8" />
            </Svg>
          </span>
        </li>
      </ul>
    </section>
  );
}

function WidgetBar() {
  return (
    <aside className="ml-px flex w-[41px] shrink-0 flex-col items-center border-l border-white pt-1">
      <div className="mb-1.5 w-9 border-t-2 border-dotted border-[#b0b0b0]" />
      {WIDGETS.map((name, i) =>
        name === null ? (
          <div key={i} className="my-1 h-px w-9 bg-[#cfcfcf]" />
        ) : (
          <button
            key={name}
            aria-label={name}
            className={`flex h-[41px] w-full items-center justify-center ${
              name === 'layers' || name === 'command'
                ? 'border border-r-0 border-[#8a8a8a] bg-linear-to-b from-[#a0a0a0] to-[#dcdcdc]'
                : ''
            }`}
          >
            <Svg size={28} box={28}>
              <rect x="0.500" y="0.500" width="27" height="27" fill="#fff" stroke="#777" />
              <path d="M5 0h23v5H5z" fill="#000" />
              {widgetIcons[name]}
            </Svg>
          </button>
        )
      )}
    </aside>
  );
}

/* ---------- preferences dialog ---------- */

interface TreeItem {
  label: string;
  parent?: boolean;
  selected?: boolean;
}

const TREE: TreeItem[] = [
  { label: 'Defaults for ...', parent: true },
  { label: 'Dimensio...' },
  { label: 'Drawing ...', selected: true },
  { label: 'Grid' },
  { label: 'Layout - ...' },
  { label: 'Linetype' },
  { label: 'Point Dis...' },
  { label: 'Printing -...' },
  { label: 'Printing -...' },
  { label: 'Printing -...' },
  { label: 'Printing -...' },
  { label: 'Draw', parent: true },
  { label: 'Text' },
  { label: 'Edit', parent: true },
  { label: 'Paste' },
  { label: 'Rotate' },
  { label: 'Substitut...' },
];

const FIELDS = [
  { id: 'drawing-unit', label: 'Drawing Unit:', value: 'Inch' },
  { id: 'paper-unit', label: 'Paper Unit:', value: 'Inch' },
  { id: 'measurement', label: 'Measurement System (for line types and hatch patterns):', value: 'Imperial' },
];

function PreferencesDialog() {
  return (
    <div role="dialog" aria-label="Application Preferences" className="absolute top-[267px] left-[1295px] flex h-[626px] w-[822px] flex-col border border-[#0078d7] bg-[#f0f0f0] text-[15px] text-black">
      <header className="flex h-[45px] shrink-0 items-center bg-white pr-[26px] pl-3.5">
        <Logo />
        <h2 className="flex-1 pl-1 font-['Open_Sans',sans-serif] text-[17px]">Application Preferences</h2>
        <button className="mr-[57px] font-['Open_Sans',sans-serif] text-[17px]">?</button>
        <button aria-label="Close dialog"><Cross size={17} /></button>
      </header>
      <div className="flex flex-1 gap-[7px] pt-4 pr-4 pl-4">
        <div className="flex w-[185px] shrink-0 flex-col">
          <div className="flex h-[26px] items-center">
            <input aria-label="Filter" placeholder="Filter" className="h-[25px] w-[86px] border border-[#7a7a7a] bg-white px-0.5 text-[15px] outline-none placeholder:text-[#8a8a8a]" />
            <div className="flex flex-1 items-center justify-between pr-2 pl-2">
              <button aria-label="Clear filter">
                <Svg size={19} box={20}>
                  <path d="M0 10l5-7h14v14H5z" fill="#000" />
                  <path d="M8.500 6l7 8M15.500 6l-7 8" stroke="#fff" strokeWidth="2.500" />
                </Svg>
              </button>
              <button aria-label="Expand all">
                <Svg size={16} box={18}>
                  <path d="M1.500 13.500v-12h13M4.500 4.500h12v12h-12zM10.500 7v7M7 10.500h7" stroke="#222" strokeWidth="1.200" />
                </Svg>
              </button>
              <button aria-label="Collapse all">
                <Svg size={16} box={18}>
                  <path d="M1.500 13.500v-12h13M4.500 4.500h12v12h-12zM7 10.500h7" stroke="#222" strokeWidth="1.200" />
                </Svg>
              </button>
            </div>
          </div>
          <div className="mt-3 flex h-[466px] border border-[#828790] bg-white">
            <ul className="flex-1 overflow-hidden font-['Open_Sans',sans-serif] text-[17px] leading-[27px] whitespace-nowrap">
              {TREE.map((item, i) =>
                item.parent ? (
                  <li key={i} className="flex h-[27px] items-center">
                    <ChevronDown size={18} strokeWidth={4} className="mr-[9px] ml-1.5 text-[#404040]" />
                    {item.label}
                  </li>
                ) : (
                  <li key={i} className={`ml-[60px] h-[27px] pl-[3px] ${item.selected ? 'bg-[#cce8ff]' : ''}`}>
                    {item.label}
                  </li>
                )
              )}
            </ul>
            <div className="flex w-[25px] shrink-0 flex-col items-center justify-between bg-[#f0f0f0] text-[#606060]">
              <div className="flex w-full flex-col items-center">
                <div className="flex h-[26px] items-center"><ChevronUp size={18} strokeWidth={3} /></div>
                <div className="h-[106px] w-full bg-[#cdcdcd]" />
              </div>
              <div className="flex h-[26px] items-center"><ChevronDown size={18} strokeWidth={3} /></div>
            </div>
          </div>
        </div>
        <div className="flex flex-1 flex-col">
          <div className="flex items-center pr-1.5">
            <h3 className="flex-1 text-2xl leading-7 font-bold whitespace-nowrap">Defaults for New Drawings: Drawing Unit</h3>
            <button aria-label="Reset to defaults">
              <Svg size={20} box={22}>
                <path d="M2 2v10h9L8 9c5-3 8 0 7 4 0 3-3 4-5 6 6 0 10-3 10-8C20 3 11 1 5 5z" fill="#fbd9a0" stroke="#d59a4a" strokeWidth="1.300" />
              </Svg>
            </button>
          </div>
          <p className="mt-2.5 border-b border-[#a0a0a0] pb-2 leading-[19px] text-[#ff0000]">
            These are default preferences for new drawings.<br />
            Changes will affect new drawings but NOT the current drawing.<br />
            Preferences of the current drawing can be changed under<br />
            <i>Edit &gt; Drawing Preferences.</i>
          </p>
          <div className="mt-6 flex flex-col gap-2 pr-3 pl-[13px]">
            {FIELDS.map((field) => (
              <div key={field.id} className="flex h-[26px] items-center justify-between">
                <label htmlFor={field.id} className="whitespace-nowrap">{field.label}</label>
                <div className="relative">
                  <select id={field.id} className="block h-[25px] w-[161px] appearance-none border border-[#adadad] bg-[#e1e1e1] pl-[3px] text-[15px]">
                    <option>{field.value}</option>
                  </select>
                  <svg width="7" height="5" className="pointer-events-none absolute top-2.5 right-1.5" aria-hidden="true">
                    <path d="M0 0h7l-3.500 5z" />
                  </svg>
                </div>
              </div>
            ))}
          </div>
        </div>
      </div>
      <footer className="flex shrink-0 justify-end gap-[11px] pr-[17px] pb-[17px]">
        <button className="h-8 w-[110px] border-2 border-[#0078d7] bg-[#e1e1e1]">OK</button>
        <button className="h-8 w-[110px] border border-[#adadad] bg-[#e1e1e1]">Cancel</button>
        <button className="h-8 w-[110px] border border-[#adadad] bg-[#e1e1e1]">Apply</button>
      </footer>
    </div>
  );
}

/* ---------- status bar and taskbar ---------- */

function StatusBar() {
  return (
    <footer className="flex h-[46px] shrink-0 items-stretch border-b-2 border-[#a8a8a8] bg-[#efefef] font-['Open_Sans',sans-serif] text-[17px] leading-5 text-black">
      <div className="w-[430px] pt-1 pl-px">
        <p>77.3,89.9</p>
        <p>@77.3,89.9</p>
      </div>
      <div className="w-[602px] border-l border-[#a8a8a8] pt-1 pl-[3px]">
        <p>118.5635&lt;49.31°</p>
        <p>@118.5635&lt;49.31°</p>
      </div>
      <div className="flex w-[577px] items-center gap-3 pt-1">
        <span>Select entity or region</span>
        <svg width="28" height="34" viewBox="0 0 28 34" className="-mt-1" aria-hidden="true">
          <path d="M2 12C2 2 20 0 24 12c3 8 4 18-6 20C6 34 2 24 2 12z" fill="#f4f4f4" stroke="#999" />
          <path d="M3 14Q14 18 22 9" fill="none" stroke="#ccc" />
          <path d="M8 30q14 2 17-12 2 14-9 14z" fill="#c4c4c4" />
          <ellipse cx="12" cy="10" rx="2.500" ry="4.500" fill="#5a7fd8" />
          <path d="M7 0l3 5" stroke="#666" strokeWidth="1.500" />
        </svg>
      </div>
      <div className="flex flex-1 items-center pt-1">No entities selected.</div>
      <div className="mt-1 flex w-[18px] items-end justify-end border-l border-[#d0d0d0]">
        <Svg size={12} box={12}>
          <path d="M9 0h3v3H9zM5 4h3v3H5zM9 4h3v3H9zM1 8h3v3H1zM5 8h3v3H5zM9 8h3v3H9z" fill="#bbb" />
        </Svg>
      </div>
    </footer>
  );
}

function Taskbar() {
  return (
    <nav className="flex h-[60px] shrink-0 bg-[#010308] font-['Open_Sans',sans-serif] text-white">
      <button aria-label="Start" className="flex w-[72px] items-center justify-center">
        <Svg size={24} box={24}>
          <path d="M0 3.500l10-1.500v9.500H0zM11 2l13-2v11.500H11zM0 12.500h10V22L0 20.500zM11 12.500h13V24l-13-2z" fill="#fff" />
        </Svg>
      </button>
      <div className="flex w-[516px] items-center bg-[#323232] pr-[18px] pl-3.5">
        <span className="h-8 w-8 shrink-0 rounded-full border-4 border-white" />
        <input aria-label="Search" placeholder="Type here to search" className="min-w-0 flex-1 bg-transparent pt-1 pl-2 text-xl outline-none placeholder:text-[#9a9a9a]" />
        <Mic size={24} strokeWidth={1.5} className="text-[#9a9a9a]" />
      </div>
      <button aria-label="Task view" className="flex w-[73px] items-center justify-center">
        <Svg size={30}>
          <path d="M7 5h16v20H7zM4 8H.8v14H4M26 8h3.200v14H26" stroke="#fff" strokeWidth="1.400" />
        </Svg>
      </button>
      <button aria-label="Store" className="flex w-20 items-center justify-center">
        <Svg size={36} box={36}>
          <path d="M2 12l32-2v24L2 31z" fill="#fff" />
          <path d="M11 12V7q0-5 5-5t5 5v4M15 11V6q0-4 4-4t5 4v5" stroke="#fff" strokeWidth="1.500" />
          <path d="M10 17l6-.5v5h-6zM17 16.500l8-1v6h-8zM10 22.500h6v5l-6-.5zM17 22.500h8v6l-8-1z" fill="#010308" />
        </Svg>
      </button>
      <button aria-label="File Explorer" className="flex w-[70px] items-center justify-center">
        <Svg size={34} box={34}>
          <path d="M1 3h13l2 2h17v25H1z" fill="#ffe48f" />
          <path d="M1 3h13l2 3-2 2H1z" fill="#f8ca45" />
          <path d="M7 18h20v14h-6v-7h-8v7H7z" fill="#3cb4e7" />
        </Svg>
      </button>
      <button aria-label="Chrome" className="flex w-20 flex-col items-center justify-end gap-2.5">
        <Svg size={34} box={34}>
          <circle cx="17" cy="17" r="16.500" fill="#fbd043" />
          <path d="M17 17L2.700 8.700A16.500 16.500 0 0 0 16 33.500l8-13z" fill="#1da05c" />
          <path d="M17 9h14.500A16.500 16.500 0 0 0 2.700 8.700L10 20z" fill="#dc4a3e" />
          <circle cx="17" cy="17" r="7.500" fill="#fff" />
          <circle cx="17" cy="17" r="6" fill="#4a8af4" />
        </Svg>
        <span className="h-[3px] w-[61px] bg-[#76b9ed]" />
      </button>
      <button aria-label="QCAD" className="flex w-[73px] flex-col items-center justify-end gap-3 bg-[#333438]">
        <Logo size={32} />
        <span className="h-[3px] w-full bg-[#76b9ed]" />
      </button>
      <div className="flex-1" />
      <div className="flex items-center">
        <ChevronUp size={26} strokeWidth={1.5} className="mr-3" />
        <Svg size={24} box={24}>
          <path d="M1 5.500h20v13H1zM21 9h2v5h-2" stroke="#fff" strokeWidth="1.500" />
          <path d="M3 7.500h10v9H3z" fill="#fff" />
        </Svg>
        <span className="ml-3.5 flex">
          <Svg size={22} box={22}>
            <path d="M2 21A19 19 0 0 1 20 3M7 21A14 14 0 0 1 20 8" stroke="#aaa" strokeWidth="1.400" />
            <path d="M11 21a9 9 0 0 1 9-8M15 21q1-4 5-4" stroke="#fff" strokeWidth="1.400" />
            <circle cx="18.500" cy="20" r="1.500" fill="#fff" />
          </Svg>
        </span>
        <span className="ml-3.5 flex">
          <Svg size={22} box={22}>
            <path d="M1 7.500h4l4-5v17l-4-5H1zM12 8q2 3 0 6M15 5.500q4 5.500 0 11" stroke="#fff" strokeWidth="1.300" />
            <path d="M18 3q6 8 0 16" stroke="#666" strokeWidth="1.300" />
          </Svg>
        </span>
        <div className="w-[122px] text-center text-lg leading-7">
          <p>10:35 AM</p>
          <p>6/26/2017</p>
        </div>
        <button aria-label="Notifications" className="relative mr-6 flex">
          <Svg size={36} box={36}>
            <path d="M4 4h24v19H18l-4 6v-6H4z" fill="#fff" />
            <path d="M9 9h14M9 13.500h14M9 18h9" stroke="#010308" strokeWidth="1.500" />
          </Svg>
          <span className="absolute top-4 left-4 flex h-6 w-6 items-center justify-center rounded-full border border-[#888] bg-[#2a2c30] text-base leading-5 font-bold">3</span>
        </button>
        <span className="h-full w-[7px] border-l border-[#777]" />
      </div>
    </nav>
  );
}

export default function App() {
  return (
    <div className="flex h-screen flex-col overflow-hidden bg-white font-['Noto_Sans',sans-serif] text-black">
      <div className="flex min-h-0 flex-1">
        <div className="flex w-3 shrink-0 flex-col border-r border-[#a0a0a0] bg-linear-to-r from-white to-[#dedede]">
          <div className="h-[42px] border-b border-[#999] bg-white" />
          <div className="h-14 border-b border-[#ccc] bg-[#ececec]" />
        </div>
        <div className="flex min-w-0 flex-1 flex-col border-t-2 border-[#a0a0a0] bg-[#efefef]">
          <header className="flex h-[42px] shrink-0 items-center bg-white pr-[23px] pl-3 text-[#999]">
            <Logo />
            <h1 className="flex-1 pl-[5px] font-['Open_Sans',sans-serif] text-[17px]">Untitled 1 - QCAD</h1>
            <button aria-label="Minimize">
              <Svg size={16} box={16}><path d="M0 8.500h16" stroke="currentColor" /></Svg>
            </button>
            <button aria-label="Maximize" className="mx-[54px]">
              <Svg size={16} box={16}><path d="M.5.5h15v15H.5z" stroke="currentColor" /></Svg>
            </button>
            <button aria-label="Close"><Cross size={17} /></button>
          </header>
          <nav className="flex h-[31px] shrink-0 items-center gap-4 bg-white pt-1 pl-[7px] font-['Open_Sans',sans-serif] text-[17px] leading-6 text-[#999]">
            {MENUS.map((menu) => (
              <button key={menu}>{menu}</button>
            ))}
          </nav>
          <Toolbars />
          <main className="flex min-h-0 flex-1 border-b border-[#b8b8b8]">
            <Palette />
            <DrawingArea />
            <LayerList />
            <WidgetBar />
          </main>
          <StatusBar />
        </div>
      </div>
      <Taskbar />
      <PreferencesDialog />
    </div>
  );
}
